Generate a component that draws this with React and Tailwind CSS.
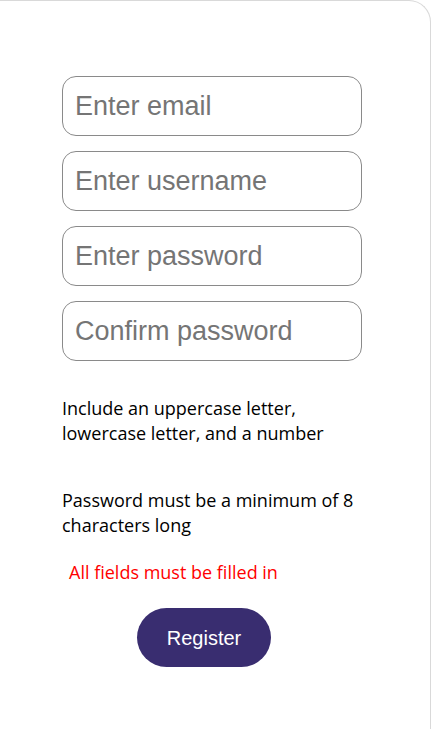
import React from 'react';

const fields = ['Enter email', 'Enter username', 'Enter password', 'Confirm password'];

const App = () => {
    return (
        <div className="w-[431px] h-[729px] bg-white overflow-hidden">
            <div className="w-[431px] h-[760px] border-t border-r border-[#d9d9d9] rounded-tr-[22px] bg-white pt-[75px] pl-[62px]">
                <form className="flex flex-col gap-[15px] w-[300px]">
                    {fields.map((f) => (
                        <input
                            key={f}
                            type={f.includes('password') ? 'password' : 'text'}
                            placeholder={f}
                            className="h-[60px] w-[300px] rounded-[14px] border border-[#8a8a8a] px-[12px] text-[27px] font-['Liberation_Sans',Arial,sans-serif] placeholder:text-[#757575] outline-none"
                        />
                    ))}
                </form>

                <div className="font-['Open_Sans','Noto_Sans',sans-serif] text-[18px] leading-[25px] text-black w-[300px]">
                    <p className="mt-[35px]">Include an uppercase letter, lowercase letter, and a number</p>
                    <p className="mt-[42px]">Password must be a minimum of 8 characters long</p>
                    <p className="mt-[22px] ml-[7px] text-[#ff0000]">All fields must be filled in</p>
                </div>

                <button className="mt-[23px] ml-[75px] w-[134px] h-[59px] rounded-full bg-[#392d70] text-white text-[20px] font-['Liberation_Sans',Arial,sans-serif]">
                    Register
                </button>
            </div>
        </div>
    );
};

export default App;
